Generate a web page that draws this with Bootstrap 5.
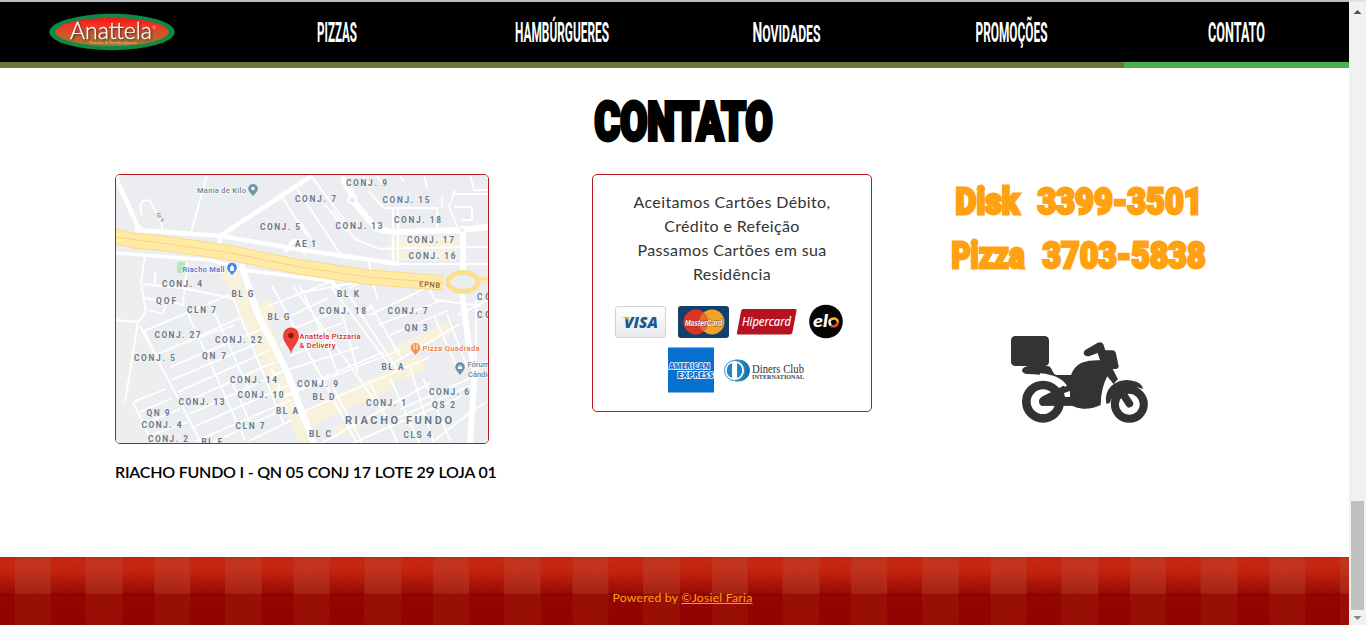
<!DOCTYPE html>
<html lang="pt-br">
<head>
<meta charset="utf-8">
<meta name="viewport" content="width=device-width, initial-scale=1">
<title>Anattela - Contato</title>
<link href="https://cdn.jsdelivr.net/npm/bootstrap@5.3.0/dist/css/bootstrap.min.css" rel="stylesheet">
<style>
body{font-family:Lato,"Open Sans",sans-serif;color:#222;background:#fff;overflow:hidden}
svg{display:block}
.page-area{width:1349px;height:625px}
.topo{height:68px;border-top:2px solid #b9bec1;background:#000}
.topo .nav-link{height:66px;padding:0;border-bottom:6px solid #6b763a}
.topo .nav-link.active{border-color:#4caf50}
.topo text{font-family:Roboto,sans-serif;font-weight:700;font-size:27px;fill:#fff}
.topo .marca{font:300 23px Lato,sans-serif;stroke:#fff;stroke-width:.3px;filter:drop-shadow(1px 1px 1px #333)}
.impacto{font-family:Roboto,"Open Sans",sans-serif;font-weight:900;stroke-linejoin:miter}
.titulo{margin-top:24px;height:58px}
.colunas{margin-top:24px;padding-left:115px}
.caixa{border:1px solid #b3191c;border-radius:5px;overflow:hidden}
.mapa{width:374px;height:270px}
.cartoes{width:280px;height:238px;margin-left:95px;padding-top:15px}
.cartoes p{font-size:16px;line-height:24px;letter-spacing:.37px;color:#333}
.endereco{font-size:16px;line-height:24px;font-weight:600;color:#000;letter-spacing:-.22px;margin-top:16px;white-space:nowrap}
.fone{margin-left:68px;width:280px}
.coluna-mapa{width:382px}
.rodape{height:68px;padding-top:31px;font-size:12.3px;line-height:19px;letter-spacing:.19px;color:#ffa011;
background:
 repeating-linear-gradient(115deg,rgba(110,0,0,.13) 0 1px,transparent 1px 3px),
 linear-gradient(90deg,transparent 15px,rgba(190,75,50,.4) 15px 51px,transparent 51px 86px,rgba(190,75,50,.4) 86px 122px,transparent 122px) 0 0/139.4px 37px repeat-x,
 linear-gradient(90deg,transparent 15px,rgba(175,45,15,.28) 15px 51px,transparent 51px 86px,rgba(175,45,15,.28) 86px 122px,transparent 122px) 0 37px/139.4px 31px repeat-x,
 linear-gradient(#b8230f 0,#cc2913 3px,#c82612 13px,#9a0c02 36px,#820300 37px,#950500 38px,#920400 100%)}
.rodape a{color:#ffa011}
.barra{width:17px;background:#f1f1f1;border-top:2px solid #e3e3e3;padding:7px 2px 3px}
.polegar{height:109px;width:13px;background:#c1c1c1}
.rotulos{font-family:Roboto,sans-serif;font-weight:700;font-size:8.3px;fill:#6a7887;stroke:#f5f7f8;stroke-width:1px;paint-order:stroke}
.lugares{font-family:Roboto,sans-serif;font-weight:500;font-size:7.5px;stroke:#fff;stroke-width:1px;paint-order:stroke}
</style>
</head>
<body>
<div class="d-flex">
<div class="page-area d-flex flex-column">
<header class="topo">
<nav class="nav nav-fill flex-nowrap">
<a class="nav-link col-2" href="#"><svg width="224" height="60" viewBox="0 2 224 60">
<defs><linearGradient id="lg" x2="0" y2="1"><stop offset="0" stop-color="#ff1010"/><stop offset=".3" stop-color="#ef3a24"/><stop offset="1" stop-color="#a07c30"/></linearGradient></defs>
<ellipse cx="112" cy="32" rx="62.7" ry="18.2" fill="#0d8a47"/><ellipse cx="112" cy="32" rx="56.5" ry="14" fill="url(#lg)"/>
<text class="marca" x="70" y="39" textLength="82" lengthAdjust="spacingAndGlyphs">Anattela</text>
<text x="152.500" y="29" style="font:4px Lato">®</text>
<text x="89" y="44" textLength="48" style="font:4px 'Open Sans';fill:#ddd39b">Pizzaria &amp; Hamburgueria</text></svg></a>
<a class="nav-link col-2" href="#"><svg width="224" height="60" viewBox="225 2 224 60"><text x="317" y="41.500" textLength="40" lengthAdjust="spacingAndGlyphs">PIZZAS</text></svg></a>
<a class="nav-link col-2" href="#"><svg width="224" height="60" viewBox="450 2 224 60"><text x="515" y="41.500" textLength="94" lengthAdjust="spacingAndGlyphs">HAMBÚRGUERES</text></svg></a>
<a class="nav-link col-2" href="#"><svg width="224" height="60" viewBox="674.5 2 224 60"><text x="753" y="41.500" textLength="68" lengthAdjust="spacingAndGlyphs">N<tspan font-size="24">OVIDADES</tspan></text></svg></a>
<a class="nav-link col-2" href="#"><svg width="224" height="60" viewBox="899.5 2 224 60"><text x="976" y="41.500" textLength="72" lengthAdjust="spacingAndGlyphs">PROMOÇÕES</text></svg></a>
<a class="nav-link col-2 active" href="#"><svg width="224" height="60" viewBox="1124 2 224 60"><text x="1208" y="41.500" textLength="57" lengthAdjust="spacingAndGlyphs">CONTATO</text></svg></a>
</nav>
</header>
<main class="flex-grow-1">
<h1 class="titulo mb-0 d-flex justify-content-center"><svg width="1349" height="58" viewBox="0 92 1349 58"><text class="impacto" x="594.500" y="140.300" font-size="54" textLength="178" lengthAdjust="spacingAndGlyphs" stroke="#000" stroke-width="4">CONTATO</text></svg></h1>
<div class="colunas d-flex align-items-start">
<section class="coluna-mapa">
<div class="caixa mapa">
<svg width="372" height="268" viewBox="116 175 372 268">
<rect x="116" y="175" width="372" height="268" fill="#ebedf0"/>
<path d="M115 252L145 256 141 282 146 315 143 332 165 385 133 402 150 444H115Z" fill="#f0eeed"/>
<g fill="#f8f1dc"><path d="M217 267h20l18 48 20 42 40 86h-16l-34-73-26-58zM253 306l17-7 8 16-10 4 16 41-10 4z"/><path d="M389 237h69v13h-69zM389 251h69v9h-69zM304 411L418 356l9 13-34 14-3 8-66 29-16 10zM387 350l60-28 5 11-61 28zM333 429l30-14 4 9-34 15z"/></g>
<rect x="177" y="262" width="8" height="11" fill="#b9e6bd"/>
<g fill="none" stroke="#fff" stroke-width="1.800">
<path d="M142 215L140 205 144 200 150 201 161 222 163 231M207 175L191 233M282 197L307 236M295 186L343 258M311 176L352 230M341 175L352 200M362 175L372 187M377 176L383 184M399 175L404 182M424 175L427 187M333 210L355 239 380 249 398 248M300 222L317 247M325 205L347 232M368 191L384 208H437V227M398 208V264M393 208V264M455 190L449 207 460 233M454 207h18v13h-10M452 194h36M470 175l4 15h14M400 248L488 247M398 264H488M367 257L372 274M442 197V208"/>
<path d="M145 256L141 282 146 312 138 322 116 320M143 284L182 288 232 298M155 271V284M187 262L183 306M144 298L176 303 184 306M148 310L163 314 166 304"/>
<path d="M140 326L202 444M144 331L229 295M165 374L144 331M188 314L245 440M212 307L252 397M233 298L284 425M175 346L235 325M156 355L240 318M170 367L262 329M172 380L265 340M178 392L270 350M183 403L275 362M190 414L280 373M191 428L291 384M196 441L291 400M133 402L166 389M138 413L172 398M143 424L180 409M148 436L188 422M133 402L153 444M230 378L253 429M210 444L288 407M249 441L292 420M138 322L125 402"/>
<path d="M272 286L357 443M293 286L380 408M300 286L325 340 338 374 284 397 271 368M266 307L340 278M282 320L328 298M285 332L337 311M281 345L342 323M290 356L347 334M275 374L359 347M291 391L384 352M332 288L390 366M340 306L358 373M348 294L398 371M370 304L402 360M349 288L371 278 378 300M300 293L370 280M370 315L430 286M378 325L443 300M390 335L449 310M390 365L460 324M304 411L430 357M280 397L400 350M320 444L430 383M332 385L362 443M369 380L398 444M390 378L420 444M410 367L433 441M423 378L451 442M434 316L458 370M447 314L467 367M400 409L480 374M395 419L474 384M380 431L460 397M353 443L404 420M430 444L472 411 485 403M359 316L371 307M428 286L435 300 481 306M476 300v60M458 315L488 300M471 376L488 360"/>
</g>
<g fill="none" stroke="#fff" stroke-linecap="round">
<path stroke-width="4.500" d="M116 178L139 229M139 230L220 236 291 248 330 254 398 264M220 236L310 177M220 236V250"/>
<path stroke-width="3.500" d="M116 253L210 260 245 270 331 281 340 291M286 251l7-10h8l3 12"/><circle cx="139" cy="229" r="3" stroke-width="2"/>
<path stroke-width="6" d="M352 200L377 229 392 232 462 230 488 227M463 230V270M462 292L468 340 475 370 470 444"/>
<path stroke-width="6.500" d="M242 267L258 315 287 372 314 444M354 199L344 180"/>
</g>
<path d="M114 236L135 241 161 243 225 252 300 267 367 277 443 283" fill="none" stroke="#f9dc85" stroke-width="15.500"/>
<path d="M114 236L135 241 161 243 225 252 300 267 367 277 443 283" fill="none" stroke="#ffe9a4" stroke-width="13.500"/>
<path d="M480 279h10" stroke="#ffe9a4" stroke-width="7"/>
<path d="M114 237L161 243 225 252 300 267 367 277 443 283M480 279h8" fill="none" stroke="#f2d685" stroke-width="1.200"/>
<ellipse cx="463" cy="282" rx="15" ry="9.500" fill="#ebedf0" stroke="#fbdf90" stroke-width="5"/><ellipse cx="352" cy="200" rx="4" ry="3.500" fill="#ebedf0" stroke="#fff" stroke-width="2"/><circle cx="462" cy="230" r="3" fill="#eee" stroke="#fff" stroke-width="2"/>
<g class="rotulos">
<text x="346" y="185.500" textLength="41">CONJ. 9</text><text x="295" y="202" textLength="41">CONJ. 7</text><text x="382.500" y="202.500" textLength="47">CONJ. 15</text><text x="394" y="223" textLength="47">CONJ. 18</text><text x="335.500" y="228.500" textLength="47">CONJ. 13</text><text x="407" y="242.500" textLength="47">CONJ. 17</text><text x="408.500" y="259" textLength="47">CONJ. 16</text><text x="260" y="229.500" textLength="40">CONJ. 5</text><text x="295" y="246.500" textLength="21">AE 1</text>
<text x="162" y="287" textLength="40">CONJ. 4</text><text x="231.500" y="296.500" textLength="22">BL G</text><text x="156" y="304" textLength="20">QOF</text><text x="187" y="313" textLength="29">CLN 7</text><text x="337" y="297" textLength="22">BL K</text><text x="477" y="300" textLength="14">CO</text><text x="319" y="314" textLength="47">CONJ. 18</text><text x="387.500" y="314" textLength="40">CONJ. 7</text><text x="404.500" y="331" textLength="23">QN 3</text><text x="477" y="317.500" textLength="14">CO</text>
<text x="154.500" y="338" textLength="46">CONJ. 27</text><text x="215" y="342.500" textLength="47">CONJ. 22</text><text x="267.500" y="320" textLength="22">BL G</text><text x="134" y="360.500" textLength="41">CONJ. 5</text><text x="202" y="359" textLength="24">QN 7</text><text x="230" y="382.500" textLength="47">CONJ. 14</text><text x="237.500" y="397.500" textLength="46">CONJ. 10</text><text x="178.500" y="404.500" textLength="46">CONJ. 13</text><text x="276" y="413.500" textLength="22">BL A</text><text x="146.500" y="415.500" textLength="23">QN 9</text><text x="141.500" y="428" textLength="40">CONJ. 4</text><text x="235.500" y="428.500" textLength="29">CLN 7</text><text x="148" y="441.500" textLength="40">CONJ. 2</text><text x="201.500" y="444.500" textLength="21">BL E</text>
<text x="297" y="386.500" textLength="41">CONJ. 9</text><text x="312.500" y="399.500" textLength="22">BL D</text><text x="381.500" y="370" textLength="22">BL A</text><text x="366" y="406" textLength="40">CONJ. 1</text><text x="429" y="394.500" textLength="40">CONJ. 6</text><text x="432" y="408" textLength="23">QS 2</text><text x="309" y="437" textLength="22">BL C</text><text x="403.500" y="438" textLength="28">CLS 4</text><text x="345" y="423.500" textLength="107" font-size="11">RIACHO FUNDO</text>
</g>
<g class="lugares">
<text x="197" y="192.700" textLength="49" fill="#6c8290">Mania de Kilo</text><text x="182.500" y="272" textLength="42" fill="#3e6fc4">Riacho Mall</text><text x="299.500" y="339" textLength="61" fill="#cf2a27">Anattela Pizzaria</text><text x="299.500" y="348" textLength="36" fill="#cf2a27">&amp; Delivery</text><text x="422.500" y="351" textLength="57" fill="#e5763b">Pizza Quadrada</text><text x="467.500" y="367" fill="#6c8290">Fórum</text><text x="468" y="376.500" fill="#6c8290">Cândido</text>
<text x="419" y="286.500" textLength="21" fill="#8c5a2c" transform="rotate(4 419 287)" style="stroke:none">EPNB</text><text transform="translate(156 214) rotate(58)" fill="#777" font-size="5.500">QI 9</text>
</g>
<g><path d="M253 196l-3.600-4a4.800 4.800 0 1 1 7.200 0z" fill="#6f98a6"/><circle cx="253" cy="188.500" r="1.700" fill="#fff"/>
<path d="M232 275l-3.600-4a4.900 4.900 0 1 1 7.200 0z" fill="#4285f4"/><path d="M230 267h4v4h-4zM231 267v-1.500h2v1.500" fill="#fff"/>
<path d="M415.500 355l-3.400-4a4.700 4.700 0 1 1 6.800 0z" fill="#f59157"/><path d="M414 344.500v5M417 344.500v5" stroke="#fff"/>
<path d="M460 375l-3.400-4.500a4.800 4.800 0 1 1 6.800 0z" fill="#6795a4"/><path d="M457.500 366.500l2.500-1.500 2.500 1.500zM458 367h4v2h-4z" fill="#fff"/>
<path d="M291 354C290 347 283 343 283 335.500a8 8 0 0 1 16 0C299 343 292 347 291 354z" fill="#ea4335"/><circle cx="291" cy="335.500" r="2.800" fill="#8c1612"/></g>
</svg>
</div>
<div class="endereco">RIACHO FUNDO I - QN 05 CONJ 17 LOTE 29 LOJA 01</div>
</section>
<section class="caixa cartoes text-center">
<p class="mb-0">Aceitamos Cartões Débito,<br>Crédito e Refeição<br>Passamos Cartões em sua<br>Residência</p>
<svg width="278" height="110" viewBox="593 295 278 110" style="margin-top:9px">
<defs><linearGradient id="vg" x2="0" y2="1"><stop stop-color="#fff"/><stop offset="1" stop-color="#e6e8ec"/></linearGradient><linearGradient id="dg"><stop stop-color="#2c9fd3"/><stop offset="1" stop-color="#176ba5"/></linearGradient></defs>
<rect x="615.500" y="306.500" width="50" height="31" rx="2.500" fill="url(#vg)" stroke="#d2d4d8"/>
<text x="624" y="328" textLength="34" lengthAdjust="spacingAndGlyphs" style="font:italic 800 15.500px 'Open Sans';fill:#1a5a92">VISA</text><path d="M622 317h6l2 5q-3-3.500-8-5z" fill="#e8a62c"/>
<rect x="678" y="306" width="51" height="32" rx="3" fill="#16406c"/><circle cx="696" cy="322" r="12.500" fill="#dd3523"/><circle cx="712" cy="322" r="12.500" fill="#f2a32c"/><path d="M704 312.400a12.500 12.500 0 0 1 0 19.200a12.500 12.500 0 0 1 0-19.200" fill="#e66b28"/>
<text x="685" y="325.500" textLength="37" lengthAdjust="spacingAndGlyphs" style="font:italic 700 8.500px 'Liberation Sans';fill:#fff;stroke:#7a2c1c;stroke-width:.8px;paint-order:stroke">MasterCard</text>
<path d="M743 309h52q2 0 1.500 2l-4 21q-.5 2.500-3 2.500H738q-1.500 0-1-2l4-21q.4-2.500 2-2.500z" fill="#b61320"/><text x="742" y="326" textLength="49" lengthAdjust="spacingAndGlyphs" style="font:italic 12.500px 'Open Sans';fill:#fff;stroke:#fff;stroke-width:.2px">Hipercard</text>
<circle cx="826" cy="321.500" r="16.800" fill="#050505"/><text x="813" y="327" textLength="15" lengthAdjust="spacingAndGlyphs" style="font:italic 900 17px Lato;fill:#fff">el</text><g fill="none" stroke-width="2.600"><path d="M831 325.300a4.200 4.200 0 0 1-.5-5.800" stroke="#fff"/><path d="M830.500 319.500q6-3 7.500 2.500" stroke="#f6bd27"/><path d="M838 322q-1 5.500-7 4" stroke="#e4492f"/></g>
<rect x="668" y="347.500" width="46" height="45" fill="#0871cf"/><g style="font:800 8.200px 'Open Sans';fill:#0871cf;stroke:#fff;stroke-width:1.500px;paint-order:stroke"><text x="669" y="369" textLength="41" lengthAdjust="spacingAndGlyphs">AMERICAN</text><text x="677.500" y="378" textLength="36" lengthAdjust="spacingAndGlyphs">EXPRESS</text></g>
<path d="M735 360h4a10.500 10.500 0 0 1 0 21h-4z" fill="url(#dg)" stroke="url(#dg)"/><circle cx="734.500" cy="370.500" r="10" fill="#fff" stroke="#298fc5"/><path d="M732 363a8 8 0 0 0 0 15zM737 363a8 8 0 0 1 0 15z" fill="#2386bd"/>
<text x="752" y="373" textLength="52" lengthAdjust="spacingAndGlyphs" style="font:12px 'Liberation Serif';fill:#333">Diners Club</text><text x="752" y="378.500" textLength="52" lengthAdjust="spacingAndGlyphs" style="font:bold 6px 'Liberation Serif';fill:#444">INTERNATIONAL</text>
</svg>
</section>
<section class="fone">
<svg width="280" height="110" viewBox="940 174 280 110"><g class="impacto" font-size="36" fill="#ffa110" stroke="#ffa110" stroke-width="2.800"><text x="955.500" y="213.500" textLength="64" lengthAdjust="spacingAndGlyphs">Disk</text><text x="1037.500" y="213.500" textLength="165" lengthAdjust="spacingAndGlyphs">3399-3501</text><text x="951.500" y="267.500" textLength="73" lengthAdjust="spacingAndGlyphs">Pizza</text><text x="1042.500" y="267.500" textLength="163" lengthAdjust="spacingAndGlyphs">3703-5838</text></g></svg>
<svg width="160" height="105" viewBox="0 0 480 315" style="margin:41px 0 0 60px"><g fill="#333">
<rect x="33" y="33" width="114" height="90" rx="13"/>
<path d="M66 136Q68 126 84 123H143Q153 125 157 138Q161 147 169 150H213Q222 124 245 113Q268 105 300 106L293 84 269 93Q254 96 251 85Q251 76 262 71L292 54Q304 48 310 58L316 76H337Q346 77 348 86L356 124Q356 131 347 132H338L354 163Q347 169 341 178L322 154Q303 188 302 240Q280 252 249 251Q231 249 216 242H124Q111 228 124 216L195 180Q170 147 80 147Q67 145 66 136Z"/>
<path d="M319 236Q313 205 333 184Q362 158 397 167Q424 171 430 192Q404 181 374 189Q344 199 328 235Z"/></g>
<g fill="none" stroke="#333"><circle cx="129" cy="230" r="50" stroke-width="26"/><circle cx="388" cy="238" r="43.500" stroke-width="24"/><path d="M129 230L190 198M129 230H225M369 207L388 236" stroke-width="23" stroke-linecap="round"/></g>
<path d="M192 204L210 198V216H195Z" fill="#fff"/>
<path d="M120 148Q180 153 198 184" fill="none" stroke="#fff" stroke-width="7"/>
<path d="M356 190L382 230" stroke="#333" stroke-width="16"/>
</svg>
</section>
</div>
</main>
<footer class="rodape text-center"><span class="ps-3">Powered by <a href="#">©Josiel Faria</a></span></footer>
</div>
<aside class="barra d-flex flex-column justify-content-between" aria-hidden="true">
<svg width="13" height="5" viewBox="0 0 13 5"><path d="M2.500 5L6.500 1 10.500 5z" fill="#505050"/></svg>
<div><div class="polegar"></div><svg class="mt-1" width="13" height="8" viewBox="0 0 13 8"><path d="M2.500 2H10.500L6.500 6z" fill="#888"/></svg></div>
</aside>
</div>
<script src="https://cdn.jsdelivr.net/npm/bootstrap@5.3.0/dist/js/bootstrap.bundle.min.js"></script>
</body>
</html>
